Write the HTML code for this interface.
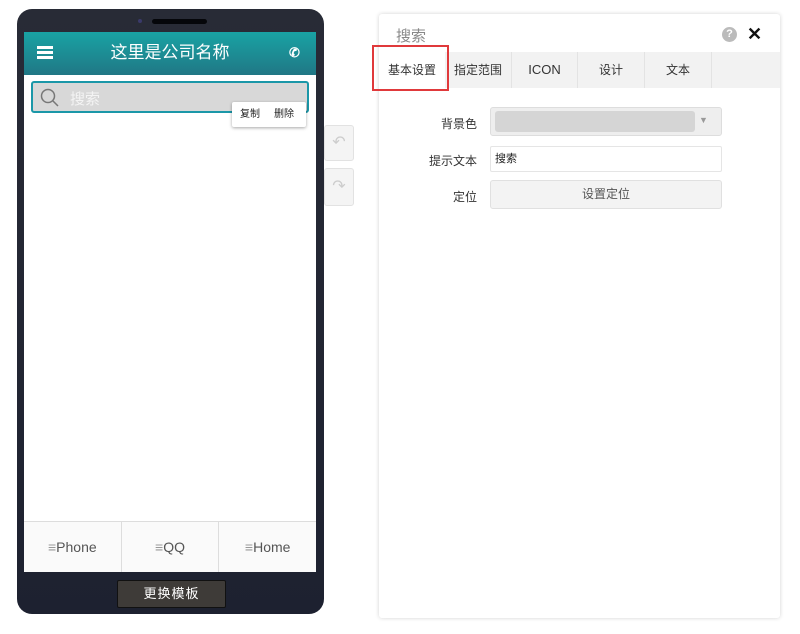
<!DOCTYPE html>
<html><head><meta charset="utf-8"><style>
*{margin:0;padding:0;box-sizing:border-box}
body{width:800px;height:634px;background:#fff;position:relative;font-family:"Liberation Sans","Noto Sans CJK SC",sans-serif;overflow:hidden}
.a{position:absolute}
</style></head><body>
<div class="a" style="left:17px;top:9px;width:307px;height:605px;background:linear-gradient(#282b36,#1d2130);border-radius:15px"></div>
<div class="a" style="left:152px;top:19px;width:55px;height:5px;background:#05060a;border-radius:3px"></div>
<div class="a" style="left:138px;top:19px;width:4px;height:4px;background:#3a3a6a;border-radius:50%"></div>
<div class="a" style="left:24px;top:32px;width:292px;height:43px;background:linear-gradient(#19a3a4,#207785)"></div>
<div class="a" style="left:37px;top:46px;width:16px;height:3px;background:#fff;box-shadow:0 5px 0 #fff,0 10px 0 #fff"></div>
<div class="a" style="left:24px;top:42px;width:292px;text-align:center;color:#fff;font-size:17px;line-height:22px">这里是公司名称</div>
<div class="a" style="left:289px;top:45px;color:#fff;font-size:13px;font-weight:bold">✆</div>
<div class="a" style="left:24px;top:75px;width:292px;height:446px;background:#fff"></div>
<div class="a" style="left:31px;top:81px;width:278px;height:32px;border:2px solid #1b97a8;background:#d8d8d8;border-radius:3px"></div>
<svg class="a" style="left:39px;top:87px" width="22" height="22"><circle cx="9" cy="9" r="6.5" fill="none" stroke="#777" stroke-width="1.5"/><line x1="14" y1="14" x2="19" y2="19" stroke="#777" stroke-width="1.5"/></svg>
<div class="a" style="left:70px;top:88px;color:#f4f4f4;font-size:15px">搜索</div>
<div class="a" style="left:232px;top:102px;width:74px;height:25px;background:#fff;box-shadow:0 1px 3px rgba(0,0,0,.35);border-radius:2px;font-size:10px;color:#222;line-height:25px"><span style="margin-left:8px">复制</span><span style="margin-left:14px">删除</span></div>
<div class="a" style="left:24px;top:521px;width:292px;height:51px;background:#fafafa;border-top:1px solid #ddd;display:flex;font-size:14px;color:#555;line-height:50px;text-align:center">
<div style="flex:1;border-right:1px solid #ddd"><span style="color:#999">≡</span>Phone</div>
<div style="flex:1;border-right:1px solid #ddd"><span style="color:#999">≡</span>QQ</div>
<div style="flex:1"><span style="color:#999">≡</span>Home</div></div>
<div class="a" style="left:117px;top:580px;width:109px;height:28px;background:#3e3b38;border:1px solid #111;border-radius:2px;color:#fff;font-size:13px;text-align:center;line-height:26px;letter-spacing:1px">更换模板</div>
<div class="a" style="left:324px;top:125px;width:30px;height:36px;background:#f4f4f4;border:1px solid #e2e2e2;border-radius:3px;color:#ccc;text-align:center;line-height:34px;font-size:16px">↶</div>
<div class="a" style="left:324px;top:168px;width:30px;height:38px;background:#f4f4f4;border:1px solid #e2e2e2;border-radius:3px;color:#ccc;text-align:center;line-height:36px;font-size:16px">↷</div>
<div class="a" style="left:379px;top:14px;width:401px;height:604px;background:#fff;box-shadow:0 0 4px rgba(0,0,0,.18);border-radius:3px"></div>
<div class="a" style="left:396px;top:25px;color:#888;font-size:15px">搜索</div>
<div class="a" style="left:722px;top:27px;width:15px;height:15px;border-radius:50%;background:#bbb;color:#fff;font-size:11px;text-align:center;line-height:15px;font-weight:bold">?</div>
<div class="a" style="left:747px;top:24px;color:#111;font-size:18px;font-weight:bold">✕</div>
<div class="a" style="left:379px;top:52px;width:401px;height:36px;background:#f2f2f2;display:flex;font-size:12px;color:#333;line-height:36px;text-align:center">
<div style="width:66px;background:#fff">基本设置</div>
<div style="width:67px;border-right:1px solid #e3e3e3">指定范围</div>
<div style="width:66px;border-right:1px solid #e3e3e3;font-size:13px">ICON</div>
<div style="width:67px;border-right:1px solid #e3e3e3">设计</div>
<div style="width:67px;border-right:1px solid #e3e3e3">文本</div></div>
<div class="a" style="left:372px;top:45px;width:77px;height:46px;border:2px solid #e0393b"></div>
<div class="a" style="left:420px;top:115px;width:57px;text-align:right;font-size:12px;color:#333">背景色</div>
<div class="a" style="left:490px;top:107px;width:232px;height:29px;background:#eee;border:1px solid #ddd;border-radius:3px"></div>
<div class="a" style="left:495px;top:111px;width:200px;height:21px;background:#d5d5d5;border-radius:3px"></div>
<div class="a" style="left:699px;top:115px;font-size:9px;color:#999">▼</div>
<div class="a" style="left:410px;top:152px;width:67px;text-align:right;font-size:12px;color:#333">提示文本</div>
<div class="a" style="left:490px;top:146px;width:232px;height:26px;border:1px solid #e5e5e5;border-radius:2px;font-size:11px;line-height:24px;padding-left:4px;color:#222">搜索</div>
<div class="a" style="left:420px;top:188px;width:57px;text-align:right;font-size:12px;color:#333">定位</div>
<div class="a" style="left:490px;top:180px;width:232px;height:29px;background:#f3f3f3;border:1px solid #e0e0e0;border-radius:3px;font-size:12px;text-align:center;line-height:27px;color:#555">设置定位</div>
</body></html>
